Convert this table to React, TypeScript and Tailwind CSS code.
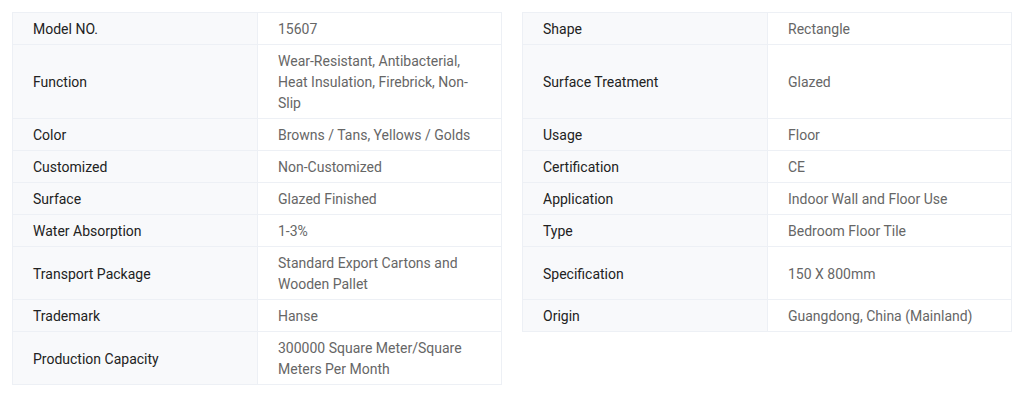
const left: [string, string][] = [
  ["Model NO.", "15607"],
  ["Function", "Wear-Resistant, Antibacterial, Heat Insulation, Firebrick, Non-Slip"],
  ["Color", "Browns / Tans, Yellows / Golds"],
  ["Customized", "Non-Customized"],
  ["Surface", "Glazed Finished"],
  ["Water Absorption", "1-3%"],
  ["Transport Package", "Standard Export Cartons and Wooden Pallet"],
  ["Trademark", "Hanse"],
  ["Production Capacity", "300000 Square Meter/Square Meters Per Month"],
];

const right: [string, string][] = [
  ["Shape", "Rectangle"],
  ["Surface Treatment", "Glazed"],
  ["Usage", "Floor"],
  ["Certification", "CE"],
  ["Application", "Indoor Wall and Floor Use"],
  ["Type", "Bedroom Floor Tile"],
  ["Specification", "150 X 800mm"],
  ["Origin", "Guangdong, China (Mainland)"],
];

function Pair({ row, first }: { row?: [string, string]; first: boolean }) {
  if (!row) {
    return (
      <>
        <div />
        <div />
      </>
    );
  }
  const edge = first ? "border-t" : "";
  return (
    <>
      <div
        className={`flex items-center border-b border-l border-r border-[#edf0f5] bg-[#f8f9fb] px-5 pt-[6px] pb-[4px] text-[#222] ${edge}`}
      >
        {row[0]}
      </div>
      <div
        className={`flex items-center border-b border-r border-[#edf0f5] bg-white px-5 pt-[6px] pb-[4px] text-[#666] ${edge}`}
      >
        {row[1]}
      </div>
    </>
  );
}

export default function App() {
  return (
    <div className="h-[398px] w-[1024px] bg-white pl-3 pt-3 font-['Roboto',sans-serif] text-[14px] leading-[21px]">
      <div className="grid grid-cols-[246px_244px_20px_246px_244px]">
        {left.map((l, i) => (
          <div key={l[0]} className="contents">
            <Pair row={l} first={i === 0} />
            <div />
            <Pair row={right[i]} first={i === 0} />
          </div>
        ))}
      </div>
    </div>
  );
}
